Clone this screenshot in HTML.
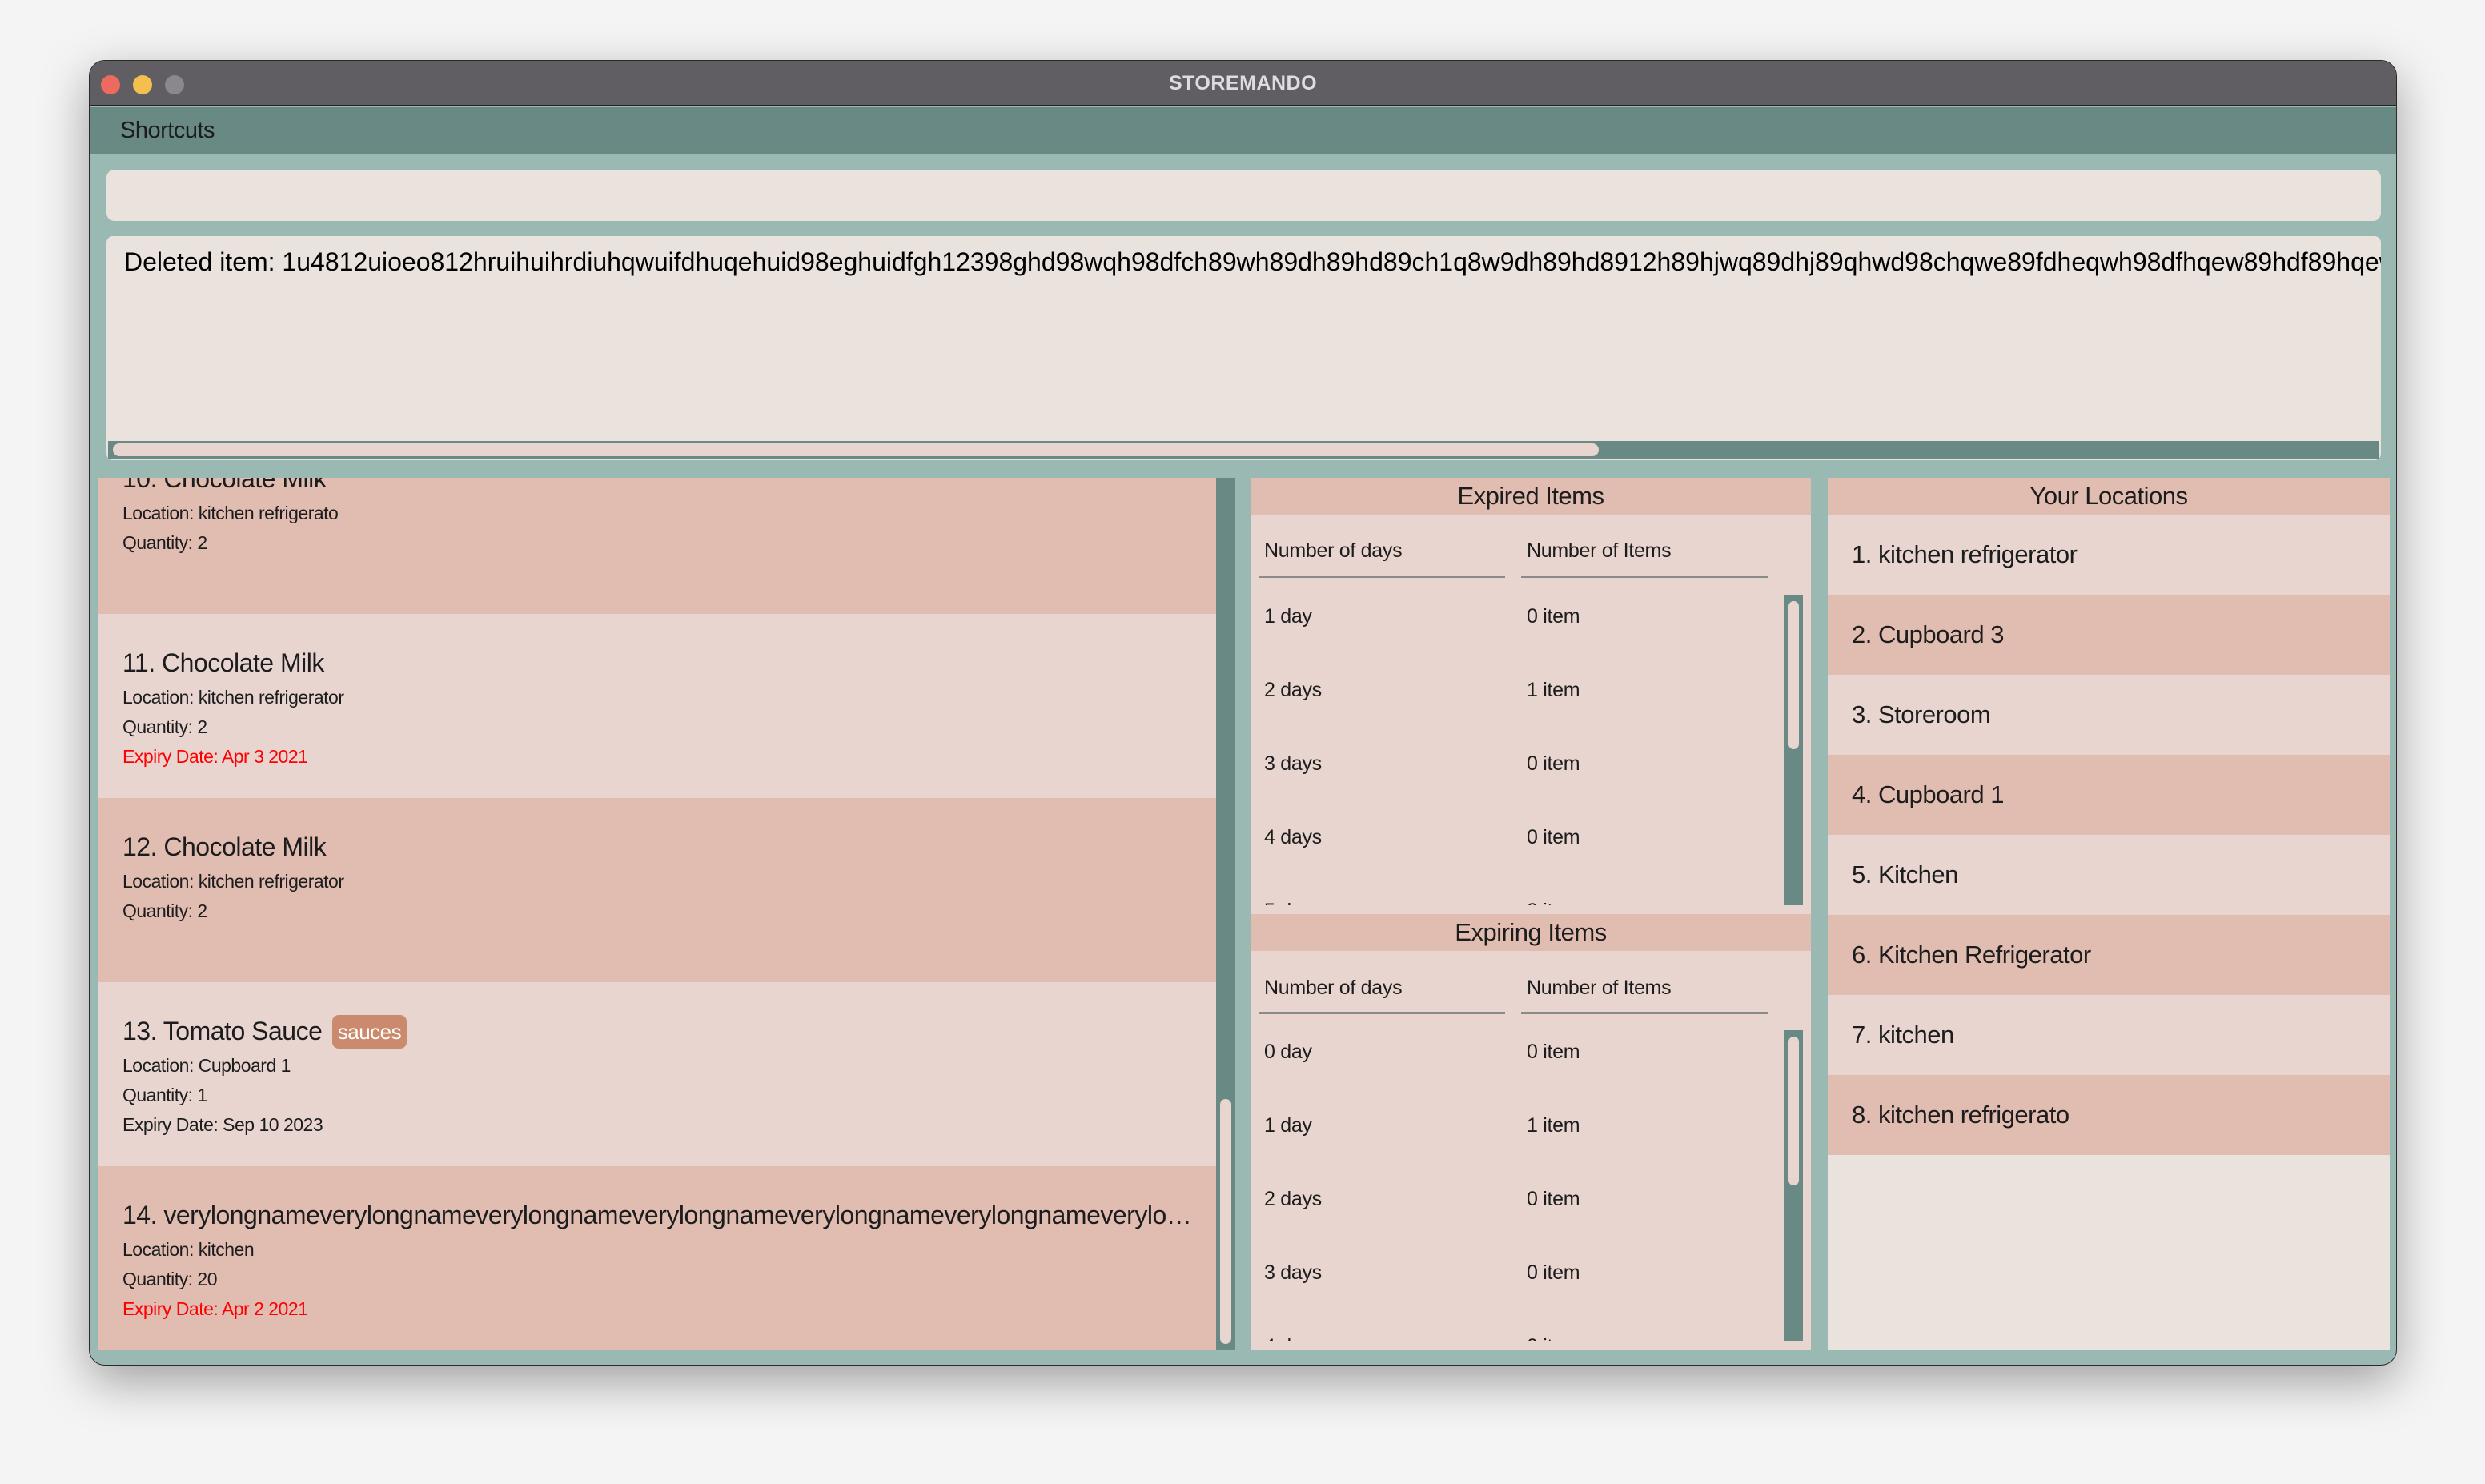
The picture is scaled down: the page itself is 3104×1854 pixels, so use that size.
<!DOCTYPE html>
<html><head><meta charset="utf-8"><style>
*{margin:0;padding:0;box-sizing:border-box}
body{width:3104px;height:1854px;background:#f4f4f4;font-family:"Liberation Sans",sans-serif;position:relative;overflow:hidden;color:#1c1c1c}
.a{position:absolute}
.win{left:111px;top:75px;width:2883px;height:1631px;border-radius:20px;overflow:hidden;background:#9ab9b3;box-shadow:0 20px 60px rgba(0,0,0,.35);border:1px solid #2a2a2a}
.t{white-space:nowrap;letter-spacing:-0.5px}
.card{position:absolute;left:0;width:1396px;height:230px;overflow:hidden}
.card .l{position:absolute;left:30px;white-space:nowrap;letter-spacing:-0.5px}
.ti{font-size:32px;height:40px;line-height:40px}
.de{font-size:23px;height:30px;line-height:30px}
.red{color:#f00}
.dk{background:#e0bcb1}.lt{background:#e9d5d0}
.hdr{position:absolute;left:0;right:0;height:46px;background:#e0bcb1;font-size:31px;line-height:46px;text-align:center;letter-spacing:-0.5px}
.cell{position:absolute;font-size:25px;line-height:30px;white-space:nowrap;letter-spacing:-0.3px}
.loc{position:absolute;left:0;right:0;height:100px;font-size:31px;line-height:100px;padding-left:30px;letter-spacing:-0.5px}
</style></head><body>
<div class="a win">
  <div class="a" style="left:0;top:0;right:0;height:57px;background:#605e62;border-bottom:2px solid #222"></div>
  <div class="a" style="left:14px;top:18px;width:24px;height:24px;border-radius:50%;background:#ec6a5e"></div>
  <div class="a" style="left:54px;top:18px;width:24px;height:24px;border-radius:50%;background:#f4bf4f"></div>
  <div class="a" style="left:94px;top:18px;width:24px;height:24px;border-radius:50%;background:#8a888c"></div>
  <div class="a" style="left:0;right:0;top:0;height:57px;line-height:57px;text-align:center;font-weight:bold;font-size:25px;color:#dedce1;letter-spacing:0.5px">STOREMANDO</div>
  <div class="a" style="left:0;right:0;top:58px;height:59px;background:#698a84"></div>
  <div class="a t" style="left:38px;top:58px;line-height:59px;font-size:29px;color:#1c1c1c">Shortcuts</div>
  <div class="a" style="left:21px;top:136px;width:2841px;height:64px;background:#e9e2dd;border-radius:10px"></div>
  <div class="a" style="left:21px;top:219px;width:2841px;height:280px;background:#e9e2dd;border-radius:8px;overflow:hidden">
    <div class="a" style="left:22px;top:12px;font-size:32px;line-height:40px;white-space:nowrap;color:#000;letter-spacing:0px">Deleted item: 1u4812uioeo812hruihuihrdiuhqwuifdhuqehuid98eghuidfgh12398ghd98wqh98dfch89wh89dh89hd89ch1q8w9dh89hd8912h89hjwq89dhj89qhwd98chqwe89fdheqwh98dfhqew89hdf89hqew</div>
    <div class="a" style="left:2px;right:2px;top:256px;height:22px;background:#698a84"></div>
    <div class="a" style="left:8px;top:259px;width:1856px;height:16px;background:#e9d5d0;border-radius:8px"></div>
  </div>
  <!-- item list -->
  <div class="a" style="left:11px;top:521px;width:1396px;height:1090px;overflow:hidden">
    <div class="card dk" style="top:-60px"><div class="l ti" style="top:41px">10. Chocolate Milk</div><div class="l de" style="top:89px">Location: kitchen refrigerato</div><div class="l de" style="top:126px">Quantity: 2</div></div>
    <div class="card lt" style="top:170px"><div class="l ti" style="top:41px">11. Chocolate Milk</div><div class="l de" style="top:89px">Location: kitchen refrigerator</div><div class="l de" style="top:126px">Quantity: 2</div><div class="l de red" style="top:163px">Expiry Date: Apr 3 2021</div></div>
    <div class="card dk" style="top:400px"><div class="l ti" style="top:41px">12. Chocolate Milk</div><div class="l de" style="top:89px">Location: kitchen refrigerator</div><div class="l de" style="top:126px">Quantity: 2</div></div>
    <div class="card lt" style="top:630px"><div class="l ti" style="top:41px">13. Tomato Sauce <span style="display:inline-block;background:#cb8a6d;color:#fff;font-size:26px;line-height:42px;height:42px;padding:0 7px;border-radius:8px;vertical-align:top;margin-left:4px;letter-spacing:-0.5px">sauces</span></div><div class="l de" style="top:89px">Location: Cupboard 1</div><div class="l de" style="top:126px">Quantity: 1</div><div class="l de" style="top:163px">Expiry Date: Sep 10 2023</div></div>
    <div class="card dk" style="top:860px"><div class="l ti" style="top:41px;width:1340px;overflow:hidden;text-overflow:ellipsis">14. verylongnameverylongnameverylongnameverylongnameverylongnameverylongnameverylongname</div><div class="l de" style="top:89px">Location: kitchen</div><div class="l de" style="top:126px">Quantity: 20</div><div class="l de red" style="top:163px">Expiry Date: Apr 2 2021</div></div>
  </div>
  <div class="a" style="left:1407px;top:521px;width:24px;height:1090px;background:#698a84"></div>
  <div class="a" style="left:1412px;top:1297px;width:14px;height:306px;background:#e9d5d0;border-radius:7px"></div>
  <!-- expired -->
  <div class="a" style="left:1450px;top:521px;width:700px;height:1090px;background:#e9d5d0;overflow:hidden">
    <div class="hdr" style="top:0">Expired Items</div>
    <div class="cell" style="left:17px;top:76px">Number of days</div>
    <div class="cell" style="left:345px;top:76px">Number of Items</div>
    <div class="a" style="left:10px;top:122px;width:308px;height:3px;background:#8a8a8a"></div>
    <div class="a" style="left:338px;top:122px;width:308px;height:3px;background:#8a8a8a"></div>
    <div class="a" style="left:0;top:146px;width:660px;height:388px;overflow:hidden">
      <div class="cell" style="left:17px;top:12px">1 day</div><div class="cell" style="left:345px;top:12px">0 item</div>
      <div class="cell" style="left:17px;top:104px">2 days</div><div class="cell" style="left:345px;top:104px">1 item</div>
      <div class="cell" style="left:17px;top:196px">3 days</div><div class="cell" style="left:345px;top:196px">0 item</div>
      <div class="cell" style="left:17px;top:288px">4 days</div><div class="cell" style="left:345px;top:288px">0 item</div>
      <div class="cell" style="left:17px;top:380px">5 days</div><div class="cell" style="left:345px;top:380px">0 item</div>
    </div>
    <div class="a" style="left:667px;top:146px;width:23px;height:388px;background:#698a84"></div>
    <div class="a" style="left:672px;top:154px;width:13px;height:185px;background:#e9d5d0;border-radius:7px"></div>
    <div class="hdr" style="top:545px">Expiring Items</div>
    <div class="cell" style="left:17px;top:622px">Number of days</div>
    <div class="cell" style="left:345px;top:622px">Number of Items</div>
    <div class="a" style="left:10px;top:667px;width:308px;height:3px;background:#8a8a8a"></div>
    <div class="a" style="left:338px;top:667px;width:308px;height:3px;background:#8a8a8a"></div>
    <div class="a" style="left:0;top:690px;width:660px;height:388px;overflow:hidden">
      <div class="cell" style="left:17px;top:12px">0 day</div><div class="cell" style="left:345px;top:12px">0 item</div>
      <div class="cell" style="left:17px;top:104px">1 day</div><div class="cell" style="left:345px;top:104px">1 item</div>
      <div class="cell" style="left:17px;top:196px">2 days</div><div class="cell" style="left:345px;top:196px">0 item</div>
      <div class="cell" style="left:17px;top:288px">3 days</div><div class="cell" style="left:345px;top:288px">0 item</div>
      <div class="cell" style="left:17px;top:380px">4 days</div><div class="cell" style="left:345px;top:380px">0 item</div>
    </div>
    <div class="a" style="left:667px;top:690px;width:23px;height:388px;background:#698a84"></div>
    <div class="a" style="left:672px;top:698px;width:13px;height:186px;background:#e9d5d0;border-radius:7px"></div>
  </div>
  <!-- locations -->
  <div class="a" style="left:2171px;top:521px;width:702px;height:1090px;background:#e9e2dd;overflow:hidden">
    <div class="hdr" style="top:0">Your Locations</div>
    <div class="loc lt" style="top:46px">1. kitchen refrigerator</div>
    <div class="loc dk" style="top:146px">2. Cupboard 3</div>
    <div class="loc lt" style="top:246px">3. Storeroom</div>
    <div class="loc dk" style="top:346px">4. Cupboard 1</div>
    <div class="loc lt" style="top:446px">5. Kitchen</div>
    <div class="loc dk" style="top:546px">6. Kitchen Refrigerator</div>
    <div class="loc lt" style="top:646px">7. kitchen</div>
    <div class="loc dk" style="top:746px">8. kitchen refrigerato</div>
  </div>
</div>
</body></html>
